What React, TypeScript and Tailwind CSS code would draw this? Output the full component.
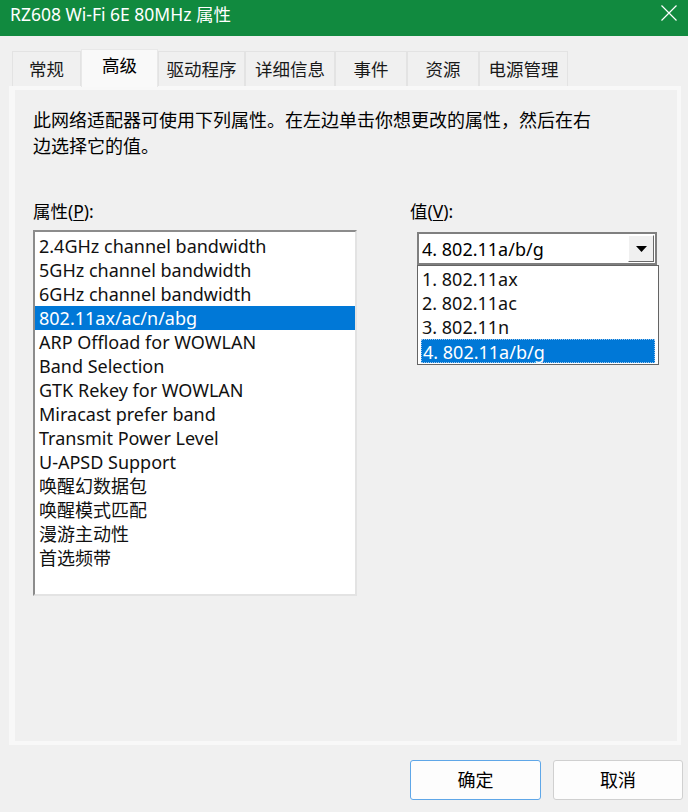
import { useState } from "react";

const font = {
	fontFamily: '"Noto Sans", "Noto Sans CJK SC", sans-serif',
};

const tabs = [
	{ label: "常规", w: "w-[69px]" },
	{ label: "高级", w: "w-[77px]" },
	{ label: "驱动程序", w: "w-[87px]" },
	{ label: "详细信息", w: "w-[90px]" },
	{ label: "事件", w: "w-[72px]" },
	{ label: "资源", w: "w-[72px]" },
	{ label: "电源管理", w: "w-[89px]" },
];

const props = [
	"2.4GHz channel bandwidth",
	"5GHz channel bandwidth",
	"6GHz channel bandwidth",
	"802.11ax/ac/n/abg",
	"ARP Offload for WOWLAN",
	"Band Selection",
	"GTK Rekey for WOWLAN",
	"Miracast prefer band",
	"Transmit Power Level",
	"U-APSD Support",
	"唤醒幻数据包",
	"唤醒模式匹配",
	"漫游主动性",
	"首选频带",
];

const values = ["1. 802.11ax", "2. 802.11ac", "3. 802.11n", "4. 802.11a/b/g"];

export default function App() {
	const [tab] = useState(1);
	const [prop, setProp] = useState(3);
	const [value, setValue] = useState(3);

	return (
		<div
			className="w-[688px] h-[812px] bg-[#f0f0f0] text-black flex flex-col overflow-hidden"
			style={font}
		>
			{/* title bar */}
			<div className="relative h-[36px] shrink-0 bg-[#118a3f] text-white">
				<div className="pl-[10px] pt-[2px] text-[17.5px] leading-[24px]">
					RZ608 Wi-Fi 6E 80MHz 属性
				</div>
				<svg
					className="absolute left-[661px] top-[5px]"
					width="16"
					height="16"
					viewBox="0 0 16 16"
				>
					<path d="M0.5 0.5L15.5 15.5M15.5 0.5L0.5 15.5" stroke="#fff" strokeWidth="1.2" />
				</svg>
			</div>

			{/* tabs */}
			<div className="flex items-end h-[50px] pl-[12px] shrink-0">
				{tabs.map((t, i) =>
					i === tab ? (
						<div
							key={t.label}
							className={`${t.w} h-[38px] -mb-[1px] relative z-10 bg-[#f9f9f9] border border-b-0 border-[#e8e8e8] pt-[3px] text-center text-[17.5px] leading-[24px]`}
						>
							{t.label}
						</div>
					) : (
						<div
							key={t.label}
							className={`${t.w} h-[35px] bg-[#f0f0f0] border border-b-0 border-[#e3e3e3] pt-[5px] text-center text-[17.5px] leading-[24px] text-[#1a1a1a]`}
						>
							{t.label}
						</div>
					),
				)}
			</div>

			{/* panel */}
			<div className="ml-[9px] w-[672px] h-[659px] shrink-0 border-4 border-l-[6px] border-[#f8f8f8] bg-[#f0f0f0]">
				<div className="pl-[18px] pt-[17px] text-[18px] leading-[26px]">
					此网络适配器可使用下列属性。在左边单击你想更改的属性，然后在右
					<br />
					边选择它的值。
				</div>

				<div className="flex mt-[39px] pl-[18px]">
					{/* left column */}
					<div className="w-[324px] flex flex-col">
						<div className="text-[17.5px] leading-[26px]">
							属性(<span className="underline underline-offset-2">P</span>):
						</div>
						<div className="mt-[6px] h-[366px] bg-white border-2 border-t-[#8c8c8c] border-l-[#8c8c8c] border-r-[#e3e3e3] border-b-[#e3e3e3] pt-[2px]">
							{props.map((p, i) => (
								<div
									key={p}
									onClick={() => setProp(i)}
									className={`h-[24px] pl-[4px] text-[18px] leading-[24px] whitespace-nowrap ${
										i === prop ? "bg-[#0078d7] text-white" : "text-[#111]"
									}`}
								>
									{p}
								</div>
							))}
						</div>
					</div>

					{/* right column */}
					<div className="ml-[53px] flex flex-col">
						<div className="text-[17.5px] leading-[26px]">
							值(<span className="underline underline-offset-2">V</span>):
						</div>
						<div className="relative ml-[7px] mt-[8px] w-[240px]">
							<div className="h-[33px] flex items-center bg-white border-2 border-[#7f7f7f]">
								<div className="flex-1 pl-[3px] text-[18px] leading-[24px]">
									{values[value]}
								</div>
								<div className="w-[26px] h-[27px] mr-[1px] flex items-center justify-center bg-[#f0f0f0] border border-t-white border-l-white border-r-[#696969] border-b-[#696969]">
									<svg width="11" height="6" viewBox="0 0 11 6">
										<path d="M0 0H11L5.5 6Z" fill="#000" />
									</svg>
								</div>
							</div>
							<div className="absolute left-0 top-[33px] w-[242px] bg-white border border-[#646464] pt-[1px] pb-[1px]">
								{values.map((v, i) => (
									<div
										key={v}
										onClick={() => setValue(i)}
										className={`h-[24px] text-[18px] leading-[24px] ${
											i === value
												? "mx-[3px] pl-[1px] bg-[#0078d7] text-white border border-dotted border-[#9bc6ee] leading-[22px]"
												: "pl-[4px] text-[#111]"
										}`}
									>
										{v}
									</div>
								))}
							</div>
						</div>
					</div>
				</div>
			</div>

			{/* buttons */}
			<div className="flex justify-end gap-[12px] pr-[5px] mt-[15px]">
				<button className="w-[131px] h-[40px] bg-[#fdfdfd] border border-[#5fa7e8] rounded-[3px] text-[18px] leading-[24px]">
					确定
				</button>
				<button className="w-[130px] h-[40px] bg-[#fdfdfd] border border-[#d0d0d0] rounded-[3px] text-[18px] leading-[24px]">
					取消
				</button>
			</div>
		</div>
	);
}
